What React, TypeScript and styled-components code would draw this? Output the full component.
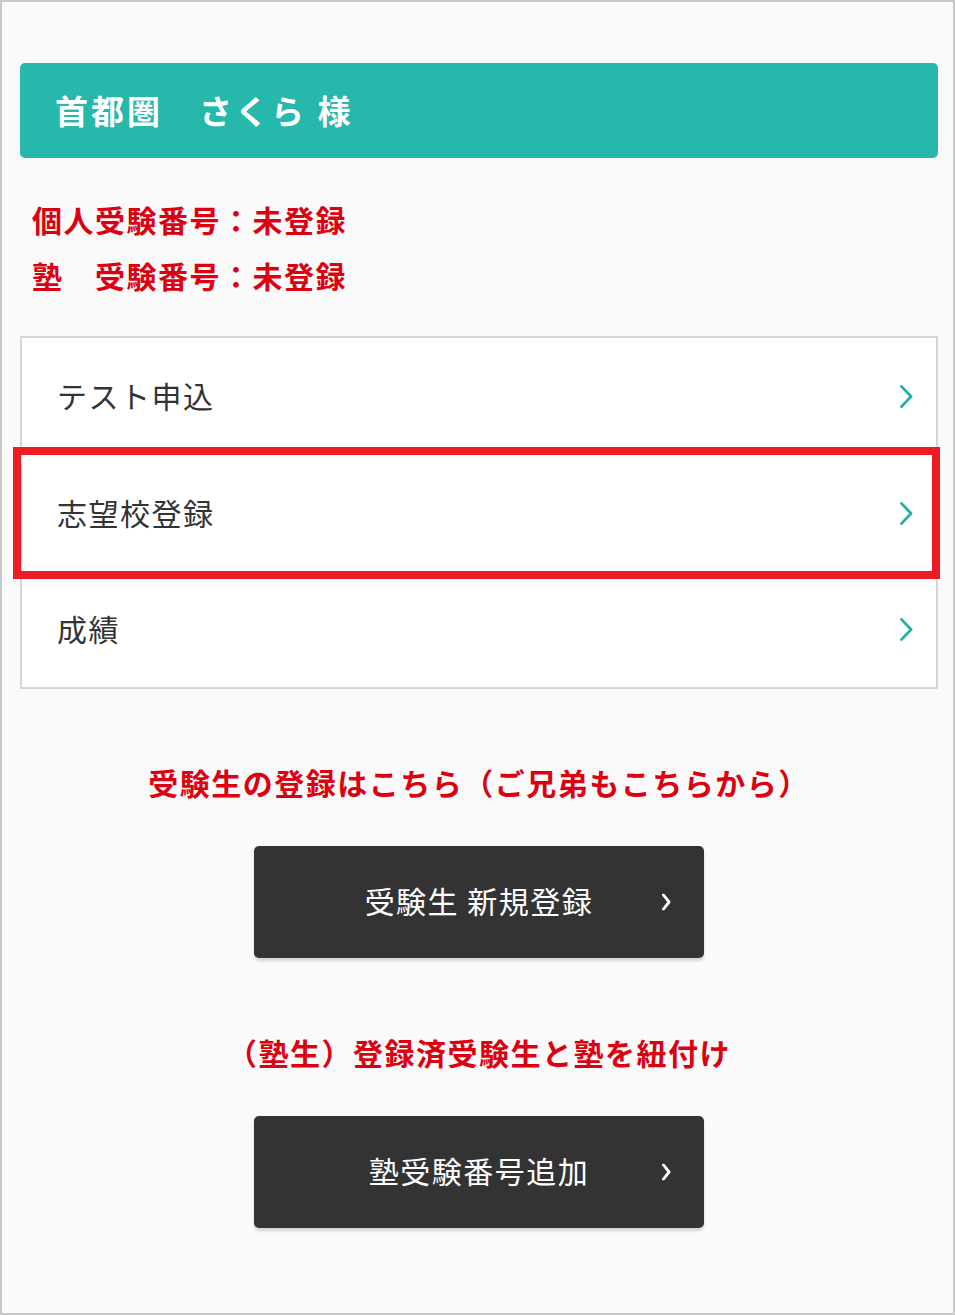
import styled, { createGlobalStyle } from "styled-components";

const GlobalStyle = createGlobalStyle`
  html, body {
    margin: 0;
    padding: 0;
    background: #fafafa;
  }
  * {
    box-sizing: border-box;
  }
`;

const Page = styled.div`
  width: 955px;
  height: 1315px;
  border: 2px solid #c8c8c8;
  background: #fafafa;
  padding: 61px 15px 0 18px;
  font-family: "Noto Sans CJK JP", "Noto Sans", sans-serif;
  color: #333333;
`;

const Header = styled.div`
  height: 95px;
  border-radius: 5px;
  background: #26b8aa;
  display: flex;
  align-items: center;
  padding: 0 0 2px 35px;
  color: #ffffff;
  font-size: 33px;
  font-weight: 700;
  letter-spacing: 3px;
`;

const Info = styled.div`
  margin-top: 33px;
  padding-left: 12px;
  color: #dd0010;
  font-size: 30px;
  font-weight: 700;
  line-height: 56px;
  letter-spacing: 1.5px;
`;

const Menu = styled.ul`
  list-style: none;
  margin: 33px 0 0;
  padding: 0;
  background: #ffffff;
  border: 2px solid #d6d6d6;
`;

const MenuRow = styled.li<{ $last?: boolean }>`
  position: relative;
  height: ${(p) => (p.$last ? "115px" : "117px")};
  display: flex;
  align-items: center;
  justify-content: space-between;
  padding: 0 23px 3px 35px;
  border-bottom: ${(p) => (p.$last ? "none" : "1px solid #e2e2e2")};
  font-size: 30px;
  letter-spacing: 1.5px;
  color: #333333;
`;

const MenuArrow = styled.span`
  display: flex;
  margin-top: 3px;
`;

const Highlight = styled.div`
  position: absolute;
  top: -8px;
  bottom: -8px;
  left: -9px;
  right: -4px;
  border: 8px solid #ed1c24;
  pointer-events: none;
  z-index: 2;
`;

const Section = styled.div<{ $top: number }>`
  margin-top: ${(p) => p.$top}px;
  display: flex;
  flex-direction: column;
  align-items: center;
`;

const Caption = styled.p`
  margin: 0;
  color: #dd0010;
  font-size: 30px;
  font-weight: 700;
  line-height: 40px;
  letter-spacing: 1.5px;
`;

const DarkButton = styled.button`
  position: relative;
  margin-top: 44px;
  width: 450px;
  height: 112px;
  border: none;
  border-radius: 5px;
  background: #333333;
  box-shadow: 0 3px 3px rgba(0, 0, 0, 0.15);
  color: #ffffff;
  font-family: inherit;
  font-size: 30px;
  letter-spacing: 1.5px;
  display: flex;
  align-items: center;
  justify-content: center;
  padding: 0 0 4px;
  cursor: pointer;
`;

const ButtonArrow = styled.span`
  position: absolute;
  right: 33px;
  top: 50%;
  transform: translateY(-50%);
  display: flex;
`;

function Chevron({ color, w, h, stroke }: { color: string; w: number; h: number; stroke: number }) {
  return (
    <svg width={w} height={h} viewBox={`0 0 ${w} ${h}`} fill="none">
      <polyline
        points={`${stroke / 2 + 1},${stroke / 2} ${w - stroke / 2 - 0.5},${h / 2} ${stroke / 2 + 1},${h - stroke / 2}`}
        stroke={color}
        strokeWidth={stroke}
        strokeLinecap="round"
        strokeLinejoin="round"
      />
    </svg>
  );
}

const menuItems = ["テスト申込", "志望校登録", "成績"];

export default function App() {
  return (
    <>
      <GlobalStyle />
      <Page>
        <Header>首都圏　さくら 様</Header>
        <Info>
          <div>個人受験番号：未登録</div>
          <div>塾　受験番号：未登録</div>
        </Info>
        <Menu>
          {menuItems.map((label, i) => (
            <MenuRow key={label} $last={i === menuItems.length - 1}>
              <span>{label}</span>
              <MenuArrow>
                <Chevron color="#26b0a5" w={14} h={23} stroke={2.8} />
              </MenuArrow>
              {i === 1 && <Highlight />}
            </MenuRow>
          ))}
        </Menu>
        <Section $top={73}>
          <Caption>受験生の登録はこちら（ご兄弟もこちらから）</Caption>
          <DarkButton>
            受験生 新規登録
            <ButtonArrow>
              <Chevron color="#ffffff" w={10} h={17} stroke={2.8} />
            </ButtonArrow>
          </DarkButton>
        </Section>
        <Section $top={74}>
          <Caption>（塾生）登録済受験生と塾を紐付け</Caption>
          <DarkButton>
            塾受験番号追加
            <ButtonArrow>
              <Chevron color="#ffffff" w={10} h={17} stroke={2.8} />
            </ButtonArrow>
          </DarkButton>
        </Section>
      </Page>
    </>
  );
}
